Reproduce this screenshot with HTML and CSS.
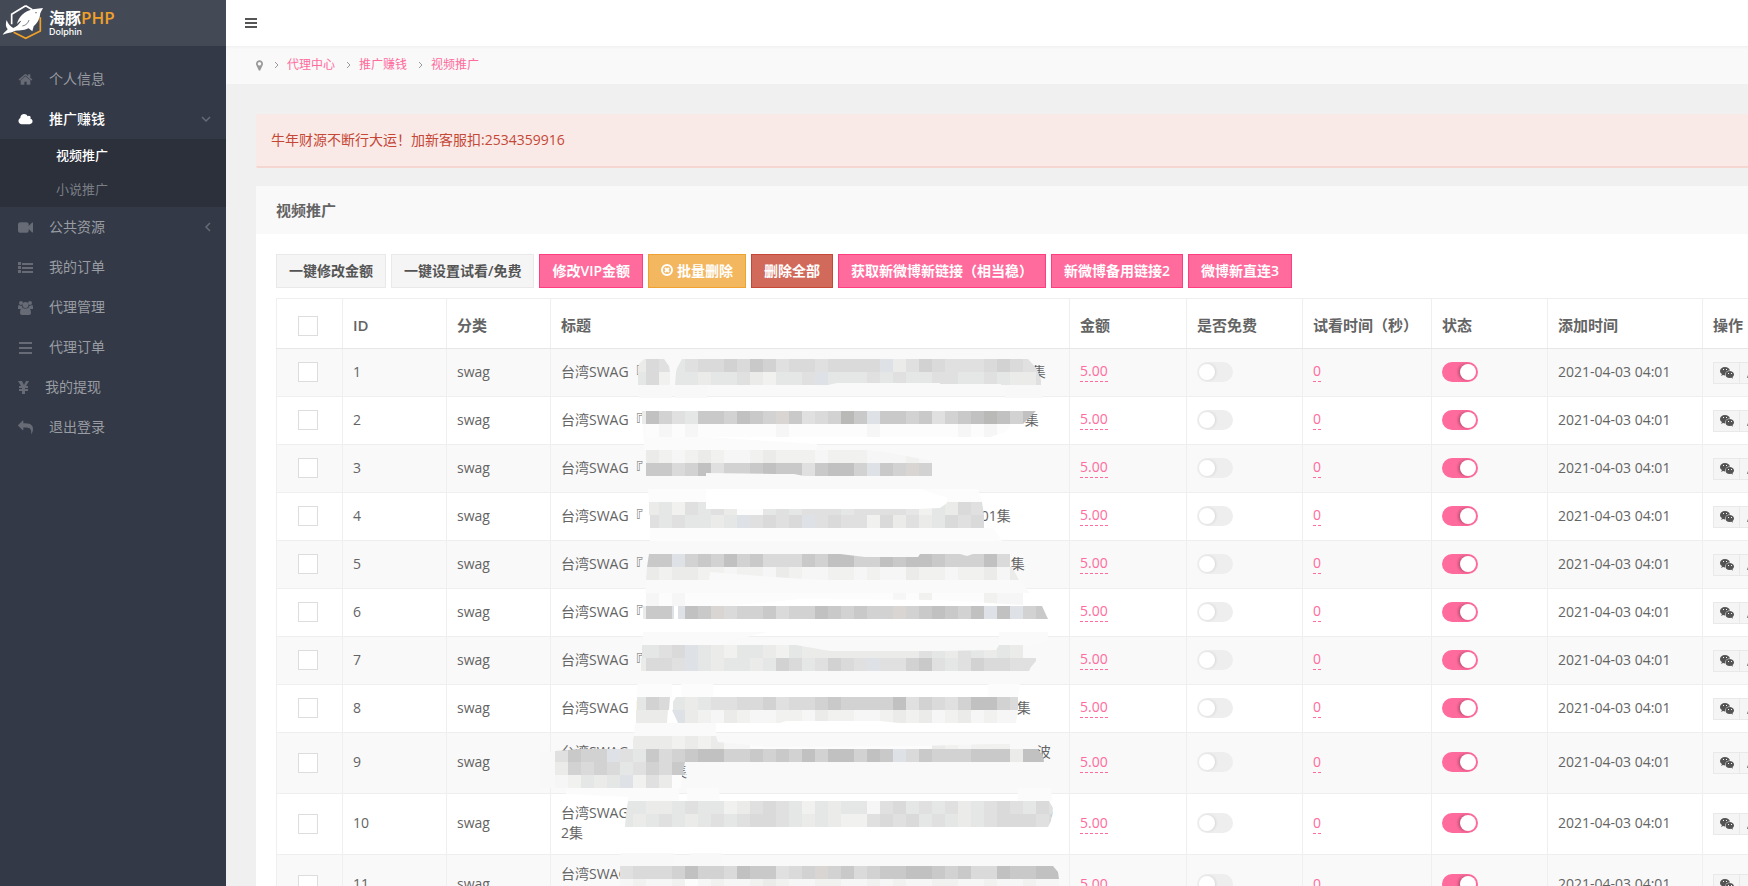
FILE: index.html
```
<!DOCTYPE html>
<html lang="zh-CN">
<head>
    <meta charset="UTF-8">
    <meta name="viewport" content="width=device-width, initial-scale=1.0">
    <title>视频推广</title>
    <link rel="stylesheet" href="styles.css">
</head>
<body>
<div class="page">
    <aside class="sidebar">
        <a class="logo" href="#">
            <svg class="logo-mark" viewBox="0 0 135 120">
                <path d="M77 17L35 43v30M77 17l20 12" fill="none" stroke="#fff" stroke-width="5"/>
                <path d="M121 52v41l-44 22-36-18" fill="none" stroke="#f0a029" stroke-width="5"/>
                <path d="M129 24C124 34 120 38 120 46C118 60 109 72 101 79L97 94L86 85C70 93 54 90 42 94C34 99 24 98 8 104C13 96 20 92 23 88C17 80 16 72 20 60C24 72 32 80 40 84C50 80 58 72 64 62C60 62 56 66 51 72C56 50 74 34 98 28Z" fill="#fff"/>
                <path d="M67 78c12-2 18-10 20-18" fill="none" stroke="#444a55" stroke-width="2"/>
                <circle cx="108" cy="38" r="2" fill="#444a55"/>
            </svg>
            <span class="logo-text">
                <span class="logo-name">海豚<b>PHP</b></span>
                <span class="logo-sub">Dolphin</span>
            </span>
        </a>
        <nav class="nav">
            <a class="nav-item" href="#">
                <svg class="nav-icon" viewBox="0 0 1792 1792"><path d="M1472 992v480q0 26-19 45t-45 19h-384v-384h-256v384h-384q-26 0-45-19t-19-45v-480q0-1 .5-3t.5-3l575-474 575 474q1 2 1 6zm223-69l-62 74q-8 9-21 11h-3q-13 0-21-7l-692-577-692 577q-12 8-24 7-13-2-21-11l-62-74q-8-10-7-23.5t11-21.5l719-599q32-26 76-26t76 26l244 204v-195q0-14 9-23t23-9h192q14 0 23 9t9 23v408l219 182q10 8 11 21.5t-7 23.5z"/></svg>
                <span>个人信息</span>
            </a>
            <a class="nav-item active" href="#">
                <svg class="nav-icon" viewBox="0 0 2048 1792"><path d="M1984 1152q0 159-112.5 271.5t-271.5 112.5h-1088q-185 0-316.5-131.5t-131.5-316.5q0-132 71-241.5t187-163.5q-2-28-2-43 0-212 150-362t362-150q158 0 286.5 88t187.5 230q70-62 166-62 106 0 181 75t75 181q0 75-41 138 129 30 213 134.5t84 239.5z"/></svg>
                <span>推广赚钱</span>
                <svg class="nav-arrow" viewBox="0 0 10 10"><path d="M1 3l4 4 4-4"/></svg>
            </a>
            <div class="subnav">
                <a class="subnav-item active" href="#">视频推广</a>
                <a class="subnav-item" href="#">小说推广</a>
            </div>
            <a class="nav-item" href="#">
                <svg class="nav-icon" viewBox="0 0 1792 1792"><path d="M1792 352v1088q0 42-39 59-13 5-25 5-27 0-45-19l-403-403v166q0 119-84.5 203.5t-203.5 84.5h-704q-119 0-203.5-84.5t-84.5-203.5v-704q0-119 84.5-203.5t203.5-84.5h704q119 0 203.5 84.5t84.5 203.5v165l403-402q18-19 45-19 12 0 25 5 39 17 39 59z"/></svg>
                <span>公共资源</span>
                <svg class="nav-arrow" viewBox="0 0 10 10"><path d="M9 1L5 5l4 4"/></svg>
            </a>
            <a class="nav-item" href="#">
                <svg class="nav-icon" viewBox="0 0 15 15"><path d="M0 2h3v3H0zM0 6h3v3H0zM0 10h3v3H0zM4 3h11v2H4zM4 7h11v2H4zM4 11h11v2H4z"/></svg>
                <span>我的订单</span>
            </a>
            <a class="nav-item" href="#">
                <svg class="nav-icon" viewBox="0 0 15 15"><circle cx="3" cy="3" r="2"/><circle cx="12" cy="3" r="2"/><circle cx="7.500" cy="5" r="3"/><path d="M0 9V7q0-2 1-2 2 1 3 1 0 2 1 2Q3 8 3 9H1Q0 9 0 9zM15 9V7q0-2-1-2-2 1-3 1 0 2-1 2 2 0 2 1h2q1 0 1 0zM2 13q0-5 3-5 2 1 5 0 3 0 3 5 0 2-2 2H4q-2 0-2-2z"/></svg>
                <span>代理管理</span>
            </a>
            <a class="nav-item" href="#">
                <svg class="nav-icon" viewBox="0 0 15 15"><path d="M1 2h13v2H1zM1 7h13v2H1zM1 12h13v2H1z"/></svg>
                <span>代理订单</span>
            </a>
            <a class="nav-item" href="#">
                <svg class="nav-icon narrow" viewBox="0 0 11 15"><path d="M0 1h4l2 4 2-4h3L8 6h2v2H7v1h3v2H7v3H4v-3H1V9h3V8H1V6h2z"/></svg>
                <span>我的提现</span>
            </a>
            <a class="nav-item" href="#">
                <svg class="nav-icon" viewBox="0 0 1792 1792"><path transform="matrix(-1 0 0 1 1792 0)" d="M1792 640q0 26-19 45l-512 512q-19 19-45 19t-45-19-19-45v-256h-224q-98 0-175.500 6t-154 21.500-133 42.500-105.500 69.500-80 101-48.500 138.500-17.500 181q0 55 5 123 0 6 2.500 23.500t2.500 26.500q0 15-8.500 25t-23.500 10q-16 0-28-17-7-9-13-22t-13.500-30-10.500-24q-127-285-127-451 0-199 53-333 162-403 875-403h224v-256q0-26 19-45t45-19 45 19l512 512q19 19 19 45z"/></svg>
                <span>退出登录</span>
            </a>
        </nav>
    </aside>

    <main class="main">
        <header class="topbar">
            <button class="menu-btn" type="button" aria-label="菜单">
                <svg viewBox="0 0 12 12"><path d="M0 1h12v2H0zM0 5h12v2H0zM0 9h12v2H0z"/></svg>
            </button>
        </header>
        <nav class="breadcrumb">
            <svg class="pin" viewBox="384 128 1024 1536"><path d="M1152 640q0-106-75-181t-181-75-181 75-75 181 75 181 181 75 181-75 75-181zm256 0q0 109-33 179l-364 774q-16 33-47.500 52t-67.500 19-67.500-19-46.500-52l-365-774q-33-70-33-179 0-212 150-362t362-150 362 150 150 362z"/></svg>
            <svg class="sep" viewBox="0 0 4 8"><path d="M0 1l3 3-3 3"/></svg>
            <a href="#">代理中心</a>
            <svg class="sep" viewBox="0 0 4 8"><path d="M0 1l3 3-3 3"/></svg>
            <a href="#">推广赚钱</a>
            <svg class="sep" viewBox="0 0 4 8"><path d="M0 1l3 3-3 3"/></svg>
            <a href="#">视频推广</a>
        </nav>

        <div class="content">
            <div class="alert">牛年财源不断行大运！加新客服扣:2534359916</div>

            <section class="block">
                <h3 class="block-title">视频推广</h3>
                <div class="block-content">
                    <div class="toolbar">
                        <button type="button" class="btn">一键修改金额</button>
                        <button type="button" class="btn">一键设置试看/免费</button>
                        <button type="button" class="btn btn-primary">修改VIP金额</button>
                        <button type="button" class="btn btn-warning">
                            <svg class="btn-icon" viewBox="0 0 12 12"><circle cx="6" cy="6" r="5"/><path d="M4 4l4 4M8 4L4 8"/></svg>
                            批量删除
                        </button>
                        <button type="button" class="btn btn-danger">删除全部</button>
                        <button type="button" class="btn btn-primary">获取新微博新链接（相当稳）</button>
                        <button type="button" class="btn btn-primary">新微博备用链接2</button>
                        <button type="button" class="btn btn-primary">微博新直连3</button>
                    </div>
                    <div class="table-wrap">
                        <table class="table">
                            <colgroup>
                                <col class="col-check">
                                <col class="col-id">
                                <col class="col-type">
                                <col class="col-title">
                                <col class="col-price">
                                <col class="col-free">
                                <col class="col-trial">
                                <col class="col-state">
                                <col class="col-time">
                                <col>
                            </colgroup>
                            <thead>
                                <tr>
                                    <th class="cell-check"><input class="check" type="checkbox" aria-label="全选"></th>
                                    <th>ID</th>
                                    <th>分类</th>
                                    <th>标题</th>
                                    <th>金额</th>
                                    <th>是否免费</th>
                                    <th>试看时间（秒）</th>
                                    <th>状态</th>
                                    <th>添加时间</th>
                                    <th>操作</th>
                                </tr>
                            </thead>
                            <tbody id="rows"></tbody>
                        </table>
                        <svg class="mosaic" id="mosaic" width="524" height="560" aria-hidden="true"></svg>
                    </div>
                </div>
            </section>
        </div>
    </main>
</div>
<script src="script.js"></script>
</body>
</html>
```
FILE: styles.css
```
* {
    box-sizing: border-box;
}
body {
    margin: 0;
    height: 100vh;
    overflow: hidden;
    background-color: #f0f0f0;
    color: #646464;
    font-family: "Open Sans", "Noto Sans CJK SC", sans-serif;
    font-size: 14px;
    line-height: 20px;
}
a {
    color: #ff6b9d;
    text-decoration: none;
}
button, input {
    font-family: inherit;
    margin: 0;
}
.page {
    display: flex;
    min-width: 1920px;
    min-height: 100vh;
}

/* sidebar */
.sidebar {
    width: 226px;
    flex: none;
    background-color: #333946;
}
.logo {
    display: flex;
    height: 46px;
    background-color: #444a55;
    color: #fff;
}
.logo-mark {
    width: 45px;
    height: 40px;
}
.logo-text {
    display: flex;
    flex-direction: column;
    padding: 9px 0 0 4px;
}
.logo-name {
    font-size: 16px;
    font-weight: 700;
    line-height: 18px;
}
.logo-name b {
    color: #f0a029;
    font-size: 17px;
    font-weight: 600;
}
.logo-sub {
    font-family: Inter, sans-serif;
    font-size: 9px;
    font-weight: 500;
    line-height: 10px;
}
.nav {
    padding-top: 13px;
}
.nav-item {
    display: flex;
    align-items: center;
    height: 40px;
    padding: 0 15px 0 18px;
    color: #999ca2;
}
.nav-icon {
    width: 15px;
    height: 15px;
    margin-right: 16px;
    fill: #666b75;
}
.nav-icon.narrow {
    width: 11px;
}
.nav-arrow {
    width: 10px;
    height: 10px;
    margin-left: auto;
    fill: none;
    stroke: #666b75;
    stroke-width: 1.5;
}
.nav-item.active {
    color: #fff;
    font-weight: 500;
}
.nav-item.active .nav-icon {
    fill: #fff;
}
.subnav {
    background-color: #2b303b;
}
.subnav-item {
    display: block;
    height: 34px;
    padding-left: 56px;
    color: #7a7e85;
    font-size: 13px;
    line-height: 32px;
}
.subnav-item.active {
    color: #fff;
    font-weight: 500;
}

/* top bars */
.main {
    flex: 1;
}
.topbar {
    display: flex;
    align-items: center;
    height: 46px;
    padding: 0 19px;
    background-color: #fff;
}
.menu-btn {
    display: flex;
    padding: 0;
    border: 0;
    background: none;
}
.menu-btn svg {
    width: 12px;
    height: 12px;
    fill: #555;
}
.breadcrumb {
    display: flex;
    align-items: center;
    height: 38px;
    padding: 0 30px;
    background-color: #f9f9f9;
    box-shadow: inset 0 3px 3px -2px #eee;
    font-size: 12px;
}
.pin {
    width: 7px;
    height: 11px;
    fill: #999;
}
.sep {
    width: 4px;
    height: 8px;
    margin: 0 8px 0 12px;
    fill: none;
    stroke: #999;
    overflow: visible;
}

/* content */
.content {
    padding: 30px;
}
.alert {
    margin-bottom: 18px;
    padding: 16px 15px;
    border-bottom: 2px solid #f5d6d1;
    border-radius: 2px;
    background-color: #f9eae8;
    color: #c54736;
}
.block {
    background-color: #fff;
}
.block-title {
    margin: 0;
    padding: 14px 20px;
    background-color: #f9f9f9;
    font-size: 15px;
    font-weight: 600;
    line-height: 20px;
}
.block-content {
    padding: 20px;
}
.toolbar {
    display: flex;
    gap: 5px;
    margin-bottom: 10px;
}
.btn {
    display: flex;
    align-items: center;
    height: 34px;
    padding: 0 12px 2px;
    border: 1px solid #e9e9e9;
    background-color: #f5f5f5;
    color: #545454;
    font-size: 14px;
    font-weight: 600;
    white-space: nowrap;
}
.btn-primary {
    border-color: #ff3d7f;
    background-color: #ff6b9d;
    color: #fff;
}
.btn-warning {
    border-color: #efa231;
    background-color: #f3b760;
    color: #fff;
}
.btn-danger {
    border-color: #c54736;
    background-color: #d26a5c;
    color: #fff;
}
.btn-icon {
    width: 12px;
    height: 12px;
    margin-right: 4px;
    fill: none;
    stroke: #fff;
    stroke-width: 2;
}

/* table */
.table-wrap {
    position: relative;
}
.table {
    width: 100%;
    table-layout: fixed;
    border-collapse: collapse;
    border: 1px solid #e9e9e9;
}
.col-check { width: 66px; }
.col-id, .col-type { width: 104px; }
.col-title { width: 519px; }
.col-price { width: 117px; }
.col-free { width: 116px; }
.col-trial { width: 129px; }
.col-state { width: 116px; }
.col-time { width: 155px; }
.table th, .table td {
    height: 48px;
    padding: 9px 10px 11px;
    border: 1px solid #efefef;
    text-align: left;
    vertical-align: middle;
}
.table th {
    height: 50px;
    padding: 14px 10px 12px;
    border-bottom-color: #e6e6e6;
    font-size: 15px;
    font-weight: 600;
    white-space: nowrap;
}
.table tbody tr:nth-child(odd) {
    background-color: #f9f9f9;
}
.table .cell-check {
    padding-right: 13px;
    padding-bottom: 10px;
}
.check {
    display: block;
    width: 20px;
    height: 20px;
    margin: 0 auto;
    border: 1px solid #ddd;
    background-color: #fff;
    appearance: none;
}
.title-line {
    display: flex;
    white-space: nowrap;
}
.edit {
    display: inline-block;
    border-bottom: 1px dashed #ff6b9d;
}
.switch {
    display: block;
    width: 36px;
    height: 20px;
    padding: 2px;
    border-radius: 10px;
    background-color: #eee;
    appearance: none;
}
.switch::before {
    content: "";
    display: block;
    width: 16px;
    height: 16px;
    border-radius: 8px;
    background-color: #fff;
    box-shadow: 1px 0 3px rgba(0, 0, 0, 0.1);
}
.switch:checked {
    background-color: #ff6b9d;
}
.switch:checked::before {
    margin-left: auto;
    box-shadow: -2px 0 3px rgba(0, 0, 0, 0.25);
}
.actions {
    display: flex;
    padding-top: 2px;
}
.action {
    display: flex;
    align-items: center;
    justify-content: center;
    width: 27px;
    height: 22px;
    margin-right: -1px;
    padding: 0;
    border: 1px solid #e9e9e9;
    background-color: #f5f5f5;
}
.action svg {
    width: 14px;
    height: 12px;
    fill: #545454;
}
/* blocks that hide the titles */
.mosaic {
    position: absolute;
    left: 264px;
    top: 42px;
    pointer-events: none;
}
```
FILE: script.js
```
// each title line: text, width of the hidden part, text after it
const rows = [
    [['台湾SWAG『', 389, '集']],
    [['台湾SWAG『', 382, '集']],
    [['台湾SWAG『', 0, '']],
    [['台湾SWAG『', 338, '01集']],
    [['台湾SWAG『', 368, '集']],
    [['台湾SWAG『', 0, '']],
    [['台湾SWAG『', 0, '']],
    [['台湾SWAG『', 374, '集']],
    [['台湾SWAG『', 394, '波'], ['', 112, '集']],
    [['台湾SWAG『', 402, '0'], ['2集', 0, '']],
    [['台湾SWAG『', 0, ''], ['集', 0, '']]
];

const wechat = '<svg viewBox="0 0 14 12"><path fill-rule="evenodd" d="M5 0C2 0 0 2 0 4c0 1.500 1 2.500 2 3L1 9l2-1 2 .5C5 5 7 3.500 10 3.500 9.500 1.500 7.500 0 5 0zM3 2h1v1H3zM6 2h1v1H6z"/><path fill-rule="evenodd" d="M9.500 4C7 4 5.500 5.500 5.500 7.500S7 11 9.500 11l2-.3 1.500 1-.5-1.700C13.500 9.300 14 8.500 14 7.500 14 5.500 12 4 9.500 4zM8 6h1v1H8zM11 6h1v1h-1z"/></svg>';
const pencil = '<svg viewBox="0 0 14 12"><path d="M1 11l1-3 7-7 2 2-7 7z"/></svg>';

document.getElementById('rows').innerHTML = rows.map((lines, i) => {
    const id = i + 1;
    const title = lines.map(([before, width, after]) =>
        `<div class="title-line"><span>${before}</span><span style="width:${width}px"></span><span>${after}</span></div>`
    ).join('');
    return `<tr>
        <td class="cell-check"><input class="check" type="checkbox" aria-label="选择 ${id}"></td>
        <td>${id}</td>
        <td>swag</td>
        <td>${title}</td>
        <td><a class="edit" href="#">5.00</a></td>
        <td><input class="switch" type="checkbox" aria-label="是否免费 ${id}"></td>
        <td><a class="edit" href="#">0</a></td>
        <td><input class="switch" type="checkbox" aria-label="状态 ${id}" checked></td>
        <td>2021-04-03 04:01</td>
        <td><div class="actions">
            <button class="action" type="button" aria-label="微信">${wechat}</button>
            <button class="action" type="button" aria-label="编辑">${pencil}</button>
        </div></td>
    </tr>`;
}).join('');

// mosaic: every strip is a line of 13px blocks, cut to an outline
const SIZE = 13;
const shades = {
    a: '#b9b9b8', b: '#c1c1c1', c: '#c9c9c9', d: '#d1d2d1', e: '#d9dad9', f: '#dfe0df',
    g: '#e5e6e6', h: '#ebebea', i: '#f1f1f0', j: '#f6f6f6', k: '#fcfcfc', m: '#d9d5d2', n: '#dee1e5'
};
const strips = [
    // x, y, shades, outline
    [93, 19, 'hefgfeedecdfeefeeeenhfdefffedeff', '98,32 99,24 104,19 124,19 129,26 130,32 136,32 137,28 142,19 488,19 496,28 498,32'],
    [93, 32, 'geigghggfhiggfngggfgfggffggfghhf', '98,32 130,32 130,45 135,45 136,32 498,32 501,40 501,45 461,45 461,44 400,44 400,43 297,43 288,45 98,45'],
    [93, 71, 'hbdfgccdbcdmcfedacnccdcfdcbabdbb', '102,71 496,71 483,84 102,84'],
    [106, 84, 'kjkjkkkkkkjkkkkkkjkkkkkkjkjk', '103,84 472,84 466,92 450,97 103,97'],
    [106, 110, 'hijihijjihiiijiiijjjij', '105,110 327,110 350,113 392,121 392,123 105,123'],
    [106, 123, 'ccedbfddcbccfcbbdncdmd', '106,123 392,123 392,136 264,136 254,134 234,134 166,133 166,136 106,136'],
    [106, 162, 'hgifgfhkkgfgfffgffffgigheff', '109,162 442,162 444,175 109,175'],
    [106, 175, 'fgfgghgnfefenfeffiehfhgefeff', '110,175 444,175 444,188 110,188'],
    [106, 214, 'ccndcdbdceeecdbbddbcbbcdddbe', '109,214 300,214 325,217 378,217 380,214 420,214 427,216 433,214 470,214 472,227 107,227'],
    [106, 227, 'hihhiijiijhijjiijijjhiijiihjhh', '107,227 472,227 479,240 280,240 220,236 170,232 169,240 106,240'],
    [106, 253, 'jkjkkkkkkkkkkkkkkkkjkikkkkijj', '105,253 496,253 500,266 400,260 260,259 190,266 105,266'],
    [93, 266, 'hccnbcmeddceddbcdcddmdcbcdbnbn', '103,266 134,266 134,279 138,279 138,266 502,266 508,279 103,279'],
    [483, 266, 'dcn', '483,266 502,266 508,279 483,279'],
    [93, 305, 'ggfenghigghighhhhhhhhhfghfghgh', '102,305 256,305 290,311 398,311 456,310 459,305 496,305 496,318 102,318'],
    [93, 318, 'heefnghgghgdegfdefnffdcfgfdeeff', '101,318 496,318 496,321 491,327 489,331 101,331'],
    [93, 357, 'gdeghgffeedfeedcddddbfdefdbbdee', '97,357 130,357 129,370 133,370 133,362 136,357 478,357 478,370 97,370'],
    [93, 370, 'hhhnhijhijjiijhiijjihihjihjijj', '96,370 128,370 127,383 138,383 132,370 478,370 476,383 359,383 340,381 246,381 240,383 96,383'],
    [93, 396, 'hhhihihjjkkkkkkkkkkkkkkhijiii', '94,396 176,396 178,402 230,407 380,406 450,404 490,404 498,409 15,409 50,407 92,404'],
    [15, 409, 'fcddnfgcedcbbddcdcdbdbbdbcnecdddccchbb', '15,411 40,409 497,409 503,415 504,422 15,422'],
    [15, 422, 'hdedegfdecn', '15,422 145,422 143,431 147,435 158,435 158,422 160,435 15,435'],
    [15, 435, 'jighgnifhkkk', '15,435 142,435 141,448 15,448'],
    [80, 461, 'gghhgfggihfefgighggjfegfgfhgfefgef', '88,461 509,461 513,468 512,474 86,474'],
    [80, 474, 'ghgfghgfgfeefghghiifefegfghgfeeefe', '86,474 512,474 511,481 508,487 85,487'],
    [80, 526, 'feeedbddebccfedmdcedccbbcdceebccbb', '80,526 513,526 518,532 519,539 79,539'],
    [80, 539, 'jijjikjijjihijjiijjijijjiijjijjijj', '79,539 519,539 519,552 79,552']
];

// pale smears left by the brush: outline, colour
const smears = [
    ['99,45 132,45 132,58 99,58', '#f8f8f8'],
    ['135,45 167,45 167,58 135,58', '#f8f8f8'],
    ['465,45 502,45 502,58 465,58', '#f8f8f8'],
    ['103,84 166,84 166,97 277,104 277,110 104,110', '#fbfbfb'],
    ['108,149 438,149 442,162 109,162', '#fcfcfc'],
    ['110,188 453,188 462,201 110,201', '#fcfcfc'],
    ['106,240 479,240 490,253 105,253', '#fafafa'],
    ['103,292 227,292 175,305 103,305', '#fafafa'],
    ['459,292 508,292 508,300 496,305 459,305', '#fafafa'],
    ['97,344 132,344 132,357 97,357', '#fcfcfc'],
    ['141,344 173,344 173,357 141,357', '#fcfcfc'],
    ['448,344 480,344 478,357 448,357', '#fcfcfc'],
    ['95,383 176,383 176,396 94,396', '#fafafa'],
    ['0,412 15,411 15,448 0,448', '#f8f8f8'],
    ['26,448 139,448 139,461 88,461 88,457 26,454', '#fbfbfb'],
    ['147,448 179,448 180,461 147,461', '#fbfbfb'],
    ['478,448 511,448 512,461 478,461', '#fbfbfb'],
    ['81,513 134,513 134,526 80,526', '#f8f8f8'],
    ['150,513 182,513 182,526 150,526', '#f8f8f8']
];
const notch = '<path fill="#fff" d="M166 149H380L407 158V163L400 168L377 169H166z"/>';

let svg = smears.map(([points, fill]) => `<polygon points="${points}" fill="${fill}"/>`).join('');
strips.forEach(([x, y, blocks, outline], i) => {
    const rects = [...blocks].map((key, n) =>
        `<rect x="${x + n * SIZE}" y="${y}" width="${SIZE}" height="${SIZE}" fill="${shades[key]}"/>`
    ).join('');
    svg += `<clipPath id="cut${i}"><polygon points="${outline}"/></clipPath>`;
    svg += `<g clip-path="url(#cut${i})" shape-rendering="crispEdges">${rects}</g>`;
});
document.getElementById('mosaic').innerHTML = svg + notch;
```
